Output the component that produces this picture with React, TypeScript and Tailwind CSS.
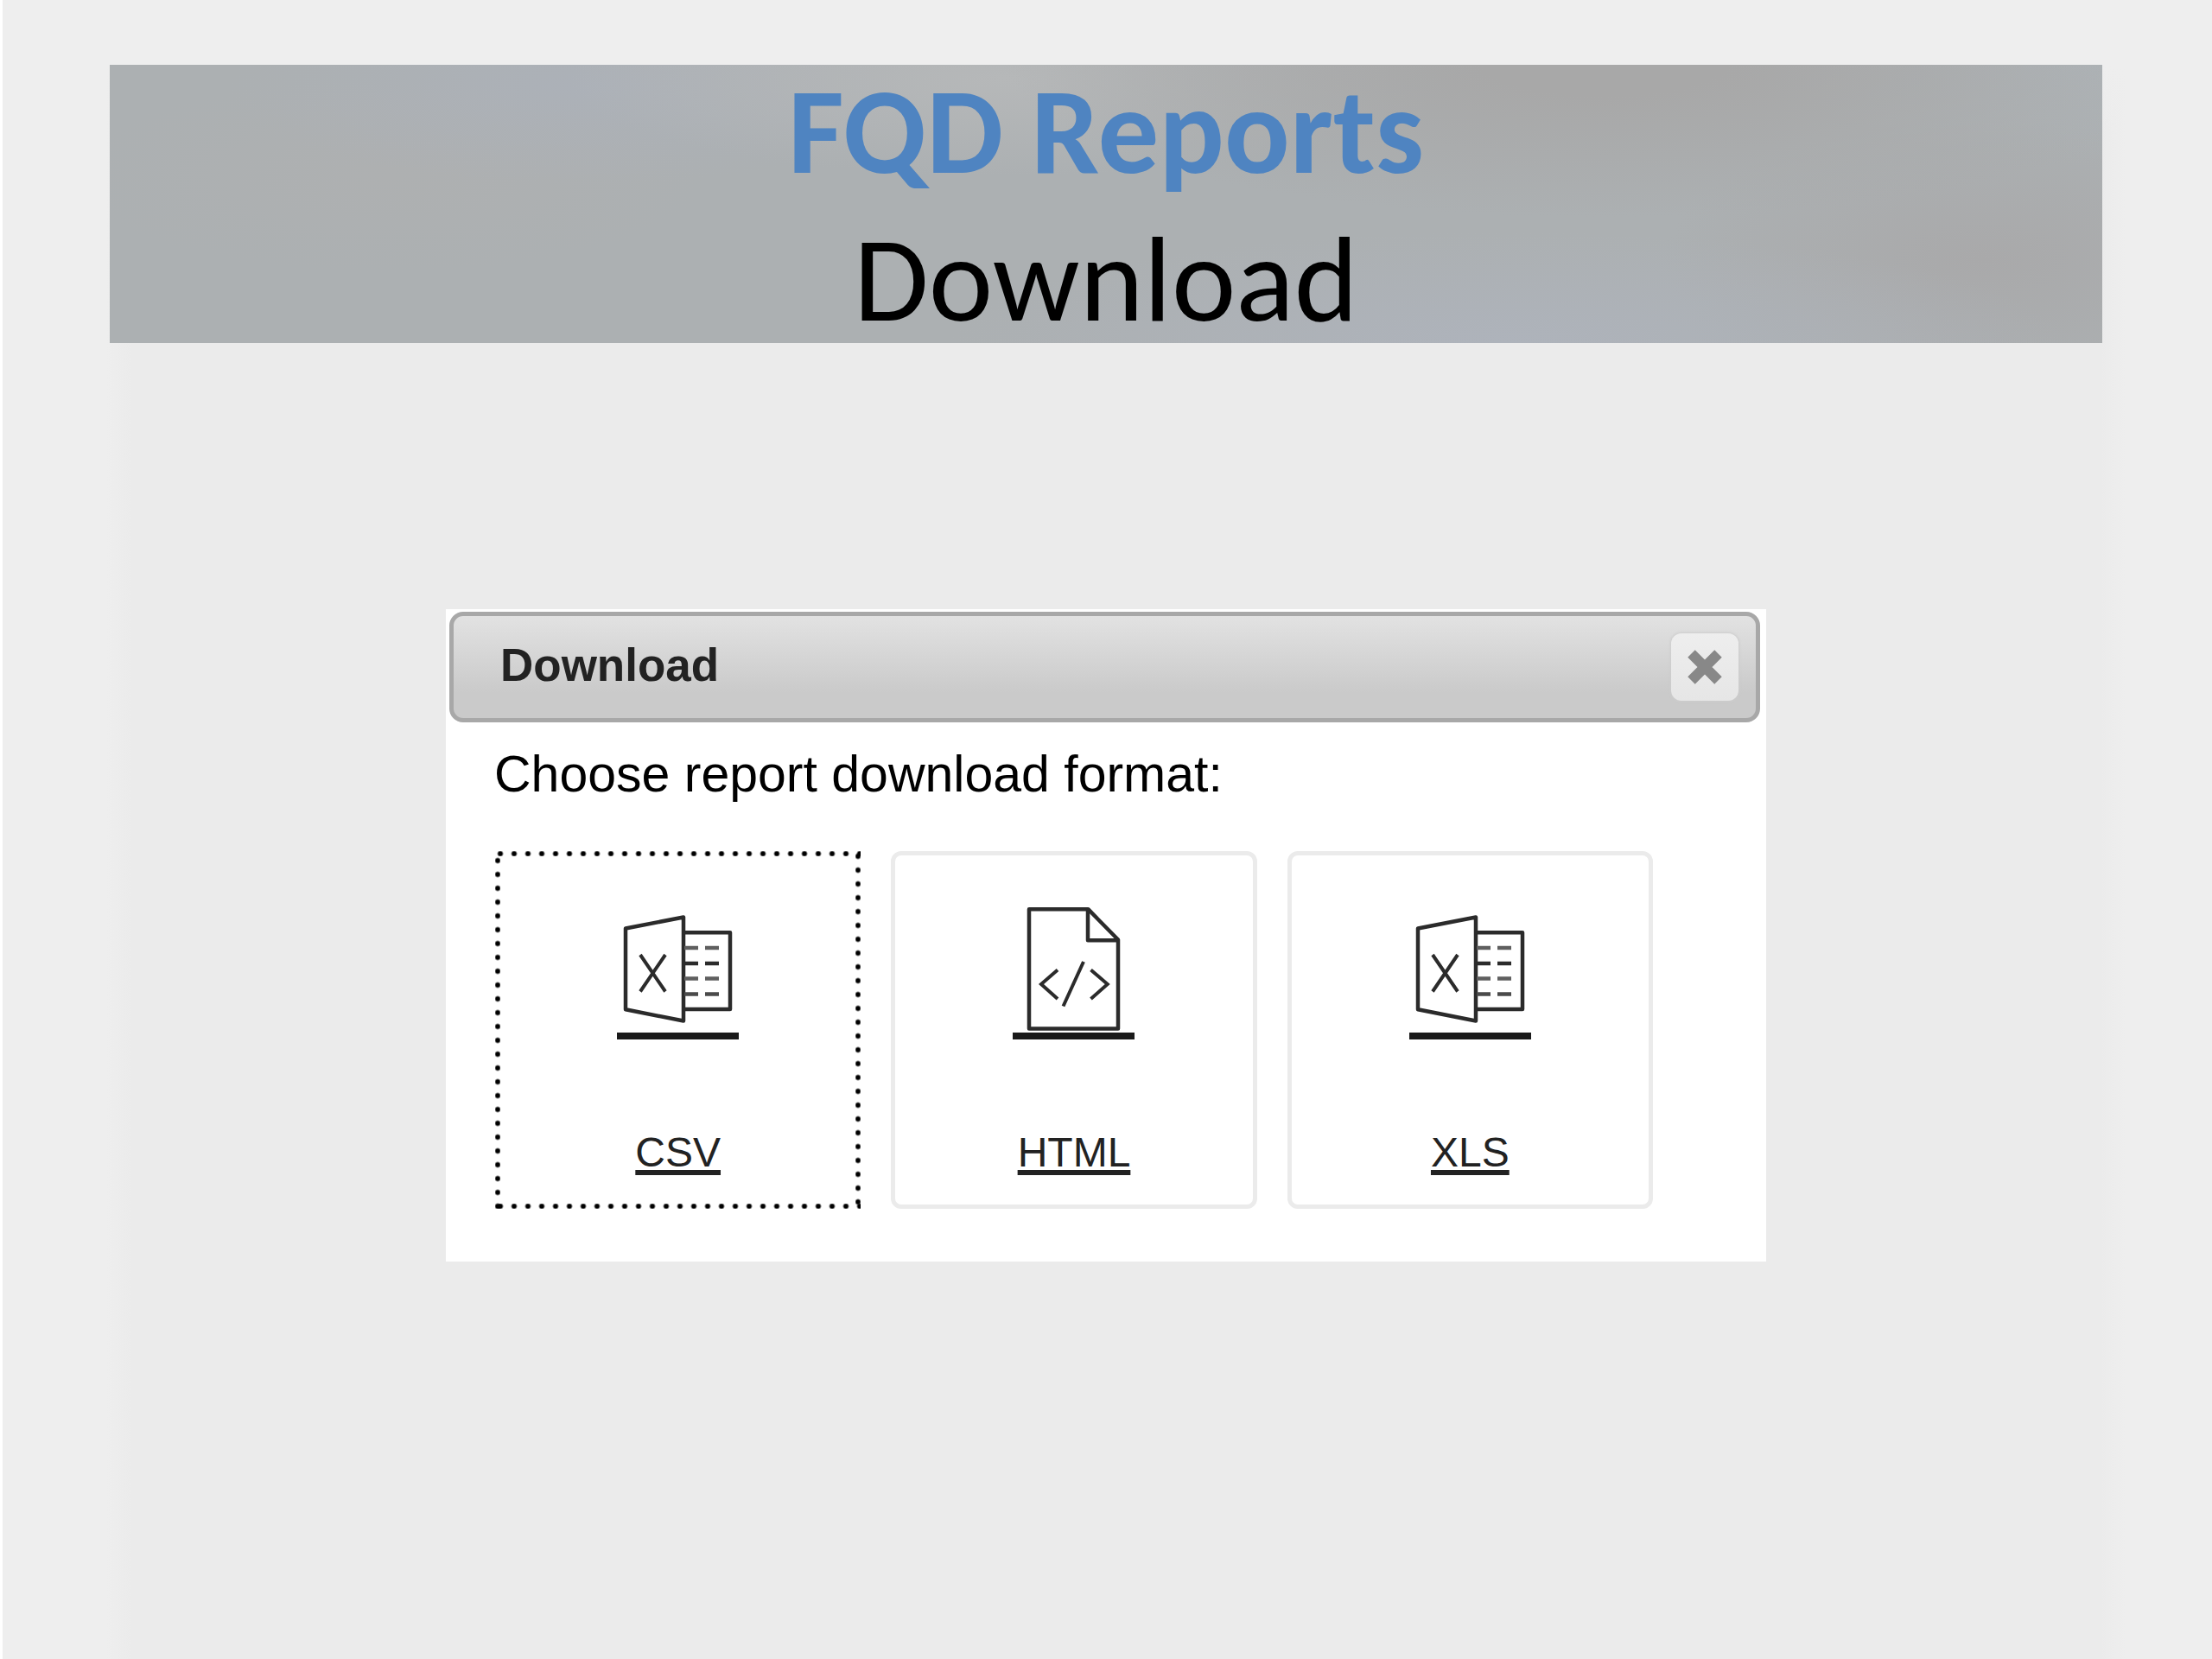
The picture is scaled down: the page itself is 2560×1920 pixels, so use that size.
import type { ReactNode } from "react";

const INK = "#2b2b2b";

function SpreadsheetIcon() {
  return (
    <svg viewBox="0 0 141 155" className="block h-[155px] w-[141px]" fill="none" stroke={INK} strokeWidth="4.5" strokeLinejoin="round" aria-hidden="true">
      <path d="M10 34.5 77 21.5V141.5L10 128.3Z" />
      <path d="M77 39.3H131V128H77" />
      <path strokeWidth="4" d="M27 65 56 107.5M56 65 27 107.5" />
      <path d="M78 75H94M102 75H118" />
      <path stroke="#5f5f5f" d="M78 57H94M102 57H118M78 92.5H94M102 92.5H118" />
      <path stroke="#4a4a4a" d="M78 110.5H94M102 110.5H118" />
    </svg>
  );
}

function CodeFileIcon() {
  return (
    <svg viewBox="0 0 141 155" className="block h-[155px] w-[141px]" fill="none" stroke={INK} strokeWidth="4.5" strokeLinejoin="round" aria-hidden="true">
      <path d="M19 12.2H87.3L122 47.5V150.5H19Z" />
      <path d="M87 12.2V48.3H122" />
      <path strokeWidth="4" strokeLinejoin="miter" d="M52 82.5 33 99 52 116M90.5 82.5 109.7 99 90.5 116M82 73 58.5 124.5" />
    </svg>
  );
}

function FormatCard({ label, icon, focused = false }: { label: string; icon: ReactNode; focused?: boolean }) {
  const frame = focused
    ? "border-transparent [background-image:radial-gradient(circle,#000_2px,transparent_4px),radial-gradient(circle,#000_2px,transparent_4px),radial-gradient(circle,#000_2px,transparent_4px),radial-gradient(circle,#000_2px,transparent_4px)] [background-size:16px_6px,16px_6px,6px_16px,6px_16px] [background-position:-2px_top,-2px_bottom,left_3px,right_-2px] [background-repeat:repeat-x,repeat-x,repeat-y,repeat-y] [background-origin:border-box]"
    : "rounded-[12px] border-[#ebebeb]";
  return (
    <a href={"#" + label.toLowerCase()} className={"flex flex-col items-center border-[5px] pt-[50px] pb-[32px] text-[#222] outline-none " + frame}>
      <span className="border-b-8 border-[#1a1a1a]">{icon}</span>
      <span className="mt-[103px] text-[48px] leading-[56px] underline decoration-[6px] underline-offset-[4px] [text-decoration-skip-ink:none]">
        {label}
      </span>
    </a>
  );
}

export default function App() {
  return (
    <main className="min-h-screen border-l-[3px] border-white bg-[#ebebeb] bg-[linear-gradient(to_bottom,#eeeeee_75px,transparent_160px),linear-gradient(to_right,#eeeeee_0,#eeeeee_120px,#ebebeb_150px,#ebebeb_calc(100%-130px),#eeeeee_calc(100%-100px))] pt-[75px] pr-[127px] pb-20 pl-[124px] font-['Liberation_Sans',Arial,sans-serif]">
      <header className="bg-[#acb0b2] bg-[radial-gradient(ellipse_30%_55%_at_75%_0%,#a8a8a8_20%,transparent),radial-gradient(ellipse_22%_35%_at_45%_5%,#b6b8b9,transparent),radial-gradient(ellipse_28%_40%_at_70%_100%,#aeb3bb,transparent),radial-gradient(ellipse_16%_50%_at_94%_70%,#a9a9aa,transparent),radial-gradient(ellipse_16%_35%_at_100%_0%,#aeb4b8,transparent),radial-gradient(ellipse_18%_35%_at_24%_8%,#acb1b8,transparent),radial-gradient(ellipse_16%_35%_at_14%_40%,#aeb0b1,transparent)] pt-[3px] pb-px">
        <h1 className="-mt-[11px] -mb-[13px] text-center font-['Carlito','Lato',sans-serif] text-[141px] leading-[171px] text-black">
          <span className="block font-bold text-[#4f84c1]">FQD Reports</span>
          <span className="block">Download</span>
        </h1>
      </header>

      <section role="dialog" aria-labelledby="dialog-title" className="mx-auto mt-[308px] w-full max-w-[1528px] bg-white pt-[3px] pb-[61px]">
        <div className="mr-[7px] ml-[4px] flex items-center justify-between rounded-[16px] border-[5px] border-[#a8a8a8] bg-linear-to-b from-[#e2e2e2] to-[#cacaca] to-75% py-[20px] pr-[20px] pl-[54px]">
          <h2 id="dialog-title" className="-mt-1 text-[53px] leading-[60px] font-bold text-[#222]">Download</h2>
          <button type="button" aria-label="Close" className="flex size-[78px] items-center justify-center rounded-[12px] bg-linear-to-b from-[#eeeeee] to-[#e6e6e6] shadow-[0_0_3px_1px_#cccccc]">
            <svg viewBox="0 0 42 42" className="size-[42px]" stroke="#888888" strokeWidth="12" aria-hidden="true">
              <path d="M5.5 5.5 36.5 36.5M36.5 5.5 5.5 36.5" />
            </svg>
          </button>
        </div>
        <p className="mt-[26px] pl-[56px] text-[59px] leading-[68px] text-black">Choose report download format:</p>
        <nav aria-label="Report formats" className="mt-[55px] mr-[131px] ml-[57px] grid grid-cols-3 gap-[35px]">
          <FormatCard label="CSV" icon={<SpreadsheetIcon />} focused />
          <FormatCard label="HTML" icon={<CodeFileIcon />} />
          <FormatCard label="XLS" icon={<SpreadsheetIcon />} />
        </nav>
      </section>
    </main>
  );
}
